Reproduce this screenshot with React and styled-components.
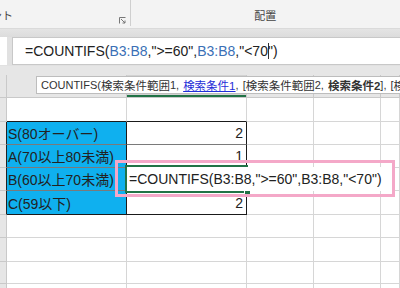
import React from 'react';
import styled, { createGlobalStyle } from 'styled-components';

const Global = createGlobalStyle`
  html, body {
    margin: 0;
    padding: 0;
    width: 400px;
    height: 288px;
    overflow: hidden;
    background: #fff;
    font-family: "Liberation Sans", "Noto Sans CJK JP", sans-serif;
  }
`;

const Window = styled.div`
  position: relative;
  width: 400px;
  height: 288px;
  overflow: hidden;
`;

const Ribbon = styled.div`
  display: flex;
  height: 29px;
  background: #f3f3f3;
  border-bottom: 1px solid #dadada;
  box-sizing: border-box;
`;

const RibbonGroup = styled.div`
  position: relative;
  display: flex;
  align-items: flex-end;
  justify-content: ${p => p.$align || 'center'};
  width: ${p => p.$width}px;
  height: 26px;
  padding-bottom: 3px;
  box-sizing: border-box;
  border-right: ${p => (p.$sep ? '1px solid #cfcfcf' : 'none')};
  overflow: hidden;
`;

const GroupLabel = styled.span`
  flex-shrink: 0;
  font-size: 11px;
  color: #444;
  white-space: nowrap;
  margin-left: ${p => p.$shift || 0}px;
`;

const Launcher = styled.svg`
  position: absolute;
  right: 4px;
  bottom: 2px;
`;

const Band = styled.div`
  height: 8px;
  background: linear-gradient(#e4e4e4, #dcdcdc);
`;

const FormulaRow = styled.div`
  display: flex;
  gap: 5px;
  height: 29px;
  background: #e1e1e1;
  padding-bottom: 1px;
  box-sizing: border-box;
`;

const NameBox = styled.div`
  width: 7px;
  background: #fff;
`;

const FormulaInput = styled.div`
  flex: 1;
  display: flex;
  align-items: center;
  background: #fff;
  border: 1px solid #c8c8c8;
  border-right: none;
  padding-left: 12px;
  font-size: 14px;
  color: #222;
  white-space: pre;
  overflow: hidden;
`;

const Ref = styled.span`
  color: #3a6fb6;
`;

const Caret = styled.span`
  display: inline-block;
  width: 1px;
  height: 16px;
  margin-right: -1px;
  background: #333;
  vertical-align: middle;
`;

const HeaderRow = styled.div`
  display: grid;
  grid-template-columns: 7px 120px 120px 67px 67px 1fr;
  height: 32px;
  background: #e6e6e6;
`;

const ColHead = styled.div`
  margin-top: 9px;
  border-right: 1px solid #c9c9c9;
  border-bottom: 1px solid #c9c9c9;
  background: ${p => (p.$active ? '#d2d2d2' : '#e6e6e6')};
  box-shadow: ${p => (p.$active ? 'inset 0 -2px 0 #217346' : 'none')};
`;

const Tooltip = styled.div`
  position: absolute;
  left: 36px;
  top: 76px;
  height: 18px;
  display: flex;
  align-items: center;
  padding: 0 4px;
  background: #fff;
  border: 1px solid #bdbdbd;
  box-sizing: border-box;
  font-size: 11px;
  word-spacing: 1px;
  color: #333;
  white-space: pre;
`;

const Jp = styled.span`
  font-size: 11.5px;
`;

const ArgLink = styled.span`
  font-size: 11.5px;
  color: #1f2fd8;
  text-decoration: underline;
`;

const ArgBold = styled.b`
  font-size: 11.5px;
  font-weight: 700;
`;

const Sheet = styled.div`
  position: relative;
`;

const Row = styled.div`
  display: grid;
  grid-template-columns: 7px 120px 120px 67px 67px 1fr;
  height: ${p => p.$h}px;
`;

const RowHead = styled.div`
  background: #e6e6e6;
  border-right: 1px solid ${p => (p.$dark ? '#222' : '#c9c9c9')};
  border-bottom: 1px solid #c9c9c9;
`;

const Cell = styled.div`
  display: flex;
  align-items: center;
  justify-content: ${p => (p.$num ? 'flex-end' : 'flex-start')};
  padding: 0 ${p => (p.$num ? 3 : 1)}px 0 1px;
  box-sizing: border-box;
  background: ${p => p.$fill || '#fff'};
  border-right: 1px solid ${p => p.$rb || '#d6d6d6'};
  border-bottom: 1px solid ${p => p.$bb || '#d6d6d6'};
  font-size: 14px;
  color: #222;
  white-space: nowrap;
  overflow: hidden;
`;

const ActiveFrame = styled.div`
  position: absolute;
  left: 125px;
  top: 67px;
  width: 123px;
  height: 28px;
  border: 2px solid #217346;
  box-sizing: border-box;
`;

const FillHandle = styled.div`
  position: absolute;
  left: 244px;
  top: 91px;
  width: 5px;
  height: 5px;
  background: #217346;
  border: 1px solid #fff;
`;

const EditText = styled.div`
  position: absolute;
  left: 127px;
  top: 69px;
  width: 265px;
  height: 24px;
  display: flex;
  align-items: center;
  padding-left: 2px;
  box-sizing: border-box;
  background: #fff;
  font-size: 14px;
  color: #222;
  white-space: nowrap;
`;

const Highlight = styled.div`
  position: absolute;
  left: 115px;
  top: 62px;
  width: 280px;
  height: 37px;
  border: 3px solid #f4a8c8;
  box-sizing: border-box;
`;

const BLUE = '#0fb0ef';
const EDGE = '#1a1a1a';
const INNER = '#7a7a7a';

const rows = [
  { h: 24 },
  { h: 23, label: 'S(80オーバー)', value: '2' },
  { h: 23, label: 'A(70以上80未満)', value: '1' },
  { h: 23, label: 'B(60以上70未満)', value: '' },
  { h: 24, label: 'C(59以下)', value: '2', last: true },
  { h: 23 },
  { h: 24 },
  { h: 22 },
  { h: 22 },
];

const FORMULA = '=COUNTIFS(B3:B8,">=60",B3:B8,"<70")';

export default function App() {
  return (
    <Window>
      <Global />
      <Ribbon>
        <RibbonGroup $width={132} $sep $align="flex-start">
          <GroupLabel $shift={-31}>フォント</GroupLabel>
          <Launcher width="7" height="7" viewBox="0 0 7 7">
            <path d="M0.5 6.5V0.5H6.5" fill="none" stroke="#777" strokeWidth="1" />
            <path d="M2 2L6 6M6 3.5V6H3.5" fill="none" stroke="#777" strokeWidth="1" />
          </Launcher>
        </RibbonGroup>
        <RibbonGroup $width={272}>
          <GroupLabel>配置</GroupLabel>
        </RibbonGroup>
      </Ribbon>
      <Band />
      <FormulaRow>
        <NameBox />
        <FormulaInput>
          =COUNTIFS(<Ref>B3:B8</Ref>,"&gt;=60",<Ref>B3:B8</Ref>,"&lt;70<Caret />")
        </FormulaInput>
      </FormulaRow>
      <HeaderRow>
        <ColHead />
        <ColHead />
        <ColHead $active />
        <ColHead />
        <ColHead />
        <ColHead />
      </HeaderRow>
      <Tooltip>
        COUNTIFS(<Jp>検索条件範囲</Jp>1, <ArgLink>検索条件1</ArgLink>, [<Jp>検索条件範囲</Jp>2, <ArgBold>検索条件2</ArgBold>], [<Jp>検索条件範囲</Jp>3, <Jp>検索条件</Jp>3]
      </Tooltip>
      <Sheet>
        {rows.map((r, i) => {
          const inTable = !!r.label;
          const aboveTable = i === 0;
          const bb = inTable ? (r.last ? EDGE : INNER) : aboveTable ? EDGE : undefined;
          return (
            <Row key={i} $h={r.h}>
              <RowHead $dark={inTable} />
              <Cell $fill={inTable ? BLUE : undefined} $rb={inTable ? EDGE : undefined} $bb={bb}>
                {r.label}
              </Cell>
              <Cell $num $rb={inTable ? EDGE : undefined} $bb={bb}>
                {r.value}
              </Cell>
              <Cell />
              <Cell />
              <Cell />
            </Row>
          );
        })}
        <ActiveFrame />
        <FillHandle />
        <EditText>{FORMULA}</EditText>
        <Highlight />
      </Sheet>
    </Window>
  );
}
